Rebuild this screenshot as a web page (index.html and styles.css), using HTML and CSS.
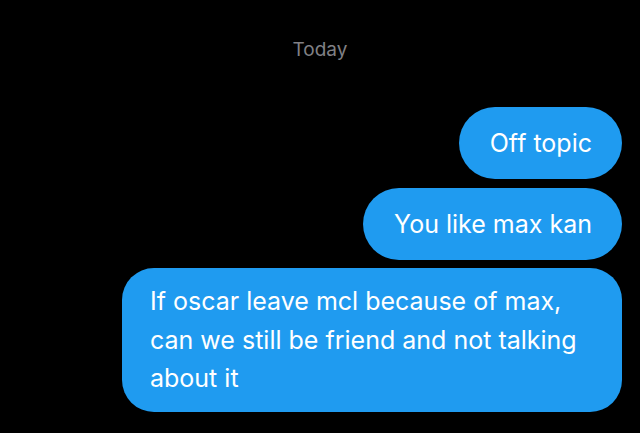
FILE: index.html
```html
<!DOCTYPE html>
<html lang="en">
<head>
<meta charset="utf-8">
<title>Messages</title>
<link rel="stylesheet" href="styles.css">
</head>
<body>
  <main class="conversation">
    <div class="day-divider">Today</div>
    <div class="thread">
      <div class="bubble">Off topic</div>
      <div class="bubble">You like max kan</div>
      <div class="bubble bubble-long">If oscar leave mcl because of max, can we still be friend and not talking about it</div>
    </div>
  </main>
</body>
</html>
```
FILE: styles.css
```css
html, body {
  margin: 0;
  padding: 0;
  background: #000;
}

body {
  width: 640px;
  height: 433px;
  overflow: hidden;
  font-family: Inter, "Noto Sans", sans-serif;
}

.conversation {
  display: flex;
  flex-direction: column;
}

.day-divider {
  margin-top: 38px;
  text-align: center;
  color: #808085;
  font-size: 19px;
  line-height: 23px;
}

.thread {
  margin-top: 46px;
  padding-right: 18px;
  display: flex;
  flex-direction: column;
  align-items: flex-end;
  gap: 8.5px;
}

.bubble {
  box-sizing: border-box;
  max-width: 500px;
  padding: 17px 30px 17px 31px;
  border-radius: 36px;
  background: #1f9bf0;
  color: #fff;
  font-size: 25px;
  line-height: 38px;
}

.bubble-long {
  width: 500px;
  padding: 14px 30px 14px 28px;
  line-height: 38.5px;
  border-radius: 32px;
}
```
